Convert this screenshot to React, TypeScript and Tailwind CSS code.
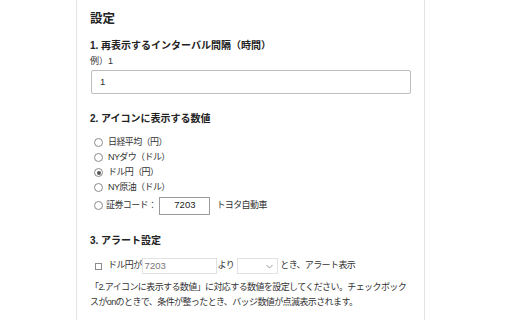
import React from "react";

const font = "font-['Liberation_Sans','Noto_Sans_CJK_JP',sans-serif]";

function Radio({ checked }: { checked?: boolean }) {
  return (
    <span className="relative flex h-[9px] w-[9px] shrink-0 items-center justify-center rounded-full border border-[#8a8a8a] bg-white">
      {checked && <span className="h-[4px] w-[4px] rounded-full bg-[#555]" />}
    </span>
  );
}

export default function App() {
  const labels = ["日経平均（円）", "NYダウ（ドル）", "ドル円（円）", "NY原油（ドル）"];
  return (
    <div className={`min-h-[320px] w-[512px] bg-white text-[#333] ${font}`}>
      <div className="ml-[76px] min-h-[320px] w-[349px] border-x border-[#e4e4e4] pl-[13px] pr-[12px]">
        <div className="pt-[11px] text-[12.5px] font-bold leading-[16px] text-[#222]">設定</div>

        <div className="mt-[13px] text-[10px] font-bold leading-[12px] text-[#222]">
          1. 再表示するインターバル間隔（時間）
        </div>
        <div className="mt-[3px] text-[9px] leading-[12px]">例）1</div>
        <div className="mt-[3px] ml-px flex h-[24px] w-[320px] items-center rounded-[2px] border border-[#bdbdbd] pl-[8px] text-[9.5px]">
          1
        </div>

        <div className="mt-[19px] text-[10px] font-bold leading-[12px] text-[#222]">
          2. アイコンに表示する数値
        </div>
        <div className="mt-[10px] flex flex-col text-[9px] tracking-[-0.6px]">
          {labels.map((l, i) => (
            <div key={l} className="flex h-[15px] items-center">
              <span className="ml-[4px] mr-[5px]">
                <Radio checked={i === 2} />
              </span>
              <span>{l}</span>
            </div>
          ))}
          <div className="mt-px flex h-[19px] items-center">
            <span className="ml-[4px] mr-[3px]">
              <Radio />
            </span>
            <span>証券コード：</span>
            <span className="ml-[3px] flex h-[18px] w-[51px] items-center justify-center border border-[#9a9a9a] text-[9.5px] tracking-normal text-[#222]">
              7203
            </span>
            <span className="ml-[6px]">トヨタ自動車</span>
          </div>
        </div>

        <div className="mt-[20px] text-[10px] font-bold leading-[12px] text-[#222]">3. アラート設定</div>
        <div className="mt-[11px] flex h-[16px] items-center text-[9px] tracking-[-0.6px]">
          <span className="ml-[5px] h-[7px] w-[7px] shrink-0 border border-[#8a8a8a] bg-white" />
          <span className="ml-[6px]">ドル円が</span>
          <span className="flex h-[16px] w-[75px] items-center border border-[#e2e2e2] pl-[2px] text-[9.5px] tracking-normal text-[#777]">
            7203
          </span>
          <span className="ml-[1px]">より</span>
          <span className="ml-[3px] flex h-[16px] w-[41px] items-center justify-end border border-[#e2e2e2] pr-[4px]">
            <svg width="7" height="5" viewBox="0 0 7 5">
              <path d="M0.5 1 L3.5 4 L6.5 1" fill="none" stroke="#999" strokeWidth="1" />
            </svg>
          </span>
          <span className="ml-[2px]">とき、アラート表示</span>
        </div>

        <p className="mt-[6px] text-[9px] leading-[15px] tracking-[-0.6px]">
          「2.アイコンに表示する数値」に対応する数値を設定してください。チェックボック
          <br />
          スがonのときで、条件が整ったとき、バッジ数値が点滅表示されます。
        </p>
      </div>
    </div>
  );
}
